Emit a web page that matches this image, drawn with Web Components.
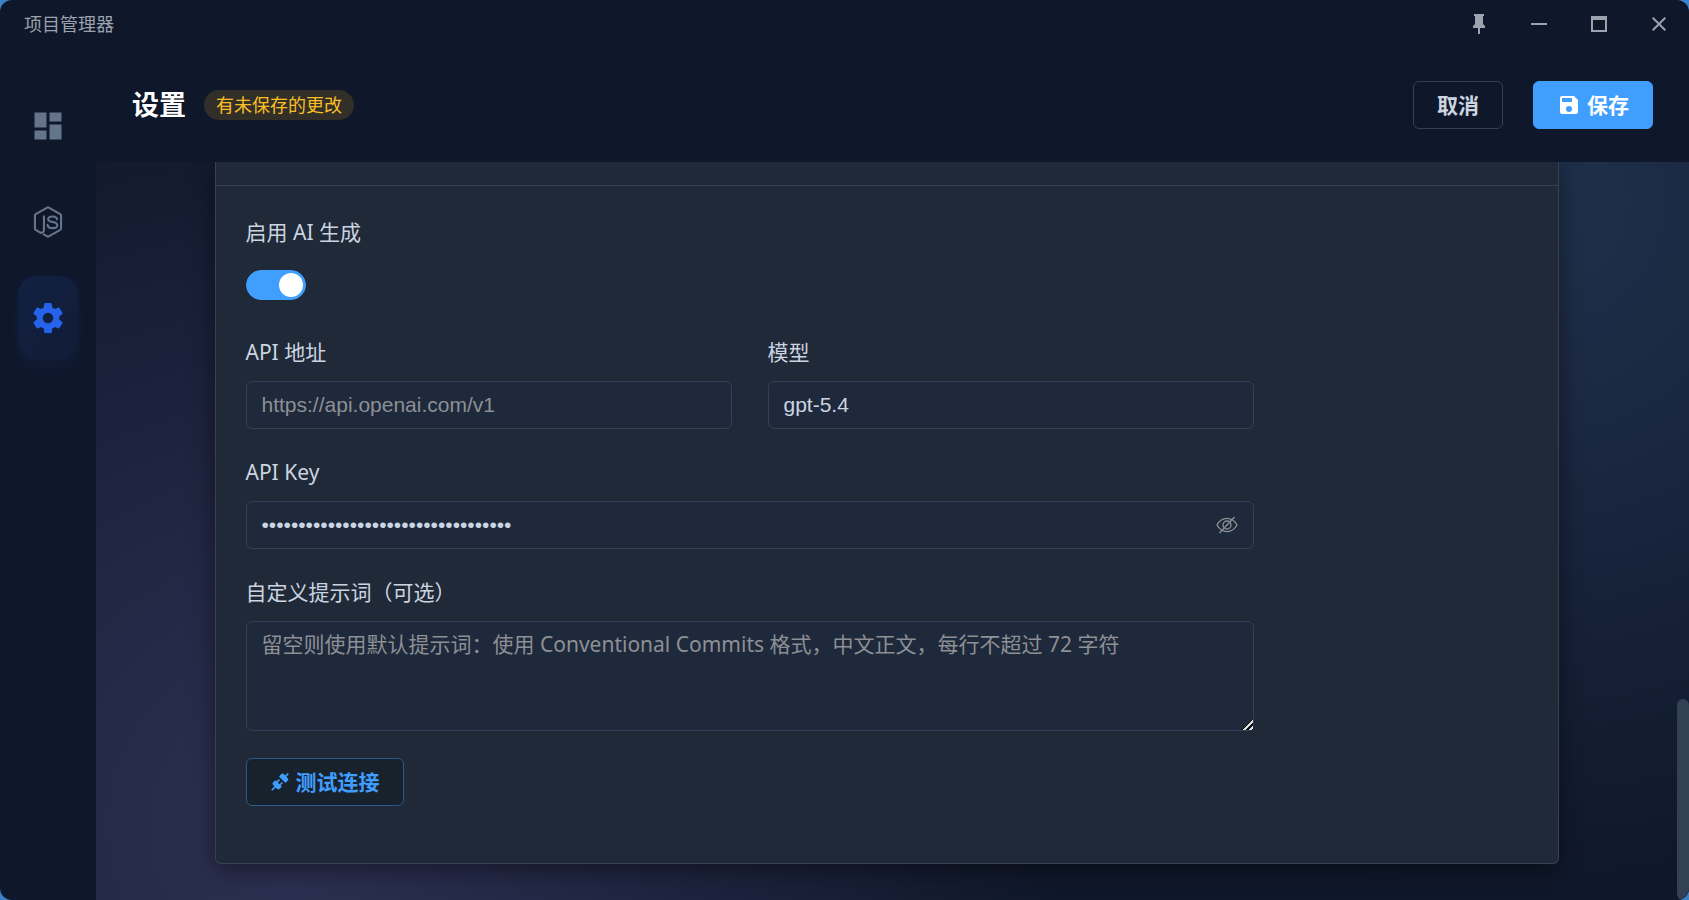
<!DOCTYPE html>
<html lang="zh-CN">
<head>
<meta charset="utf-8">
<title>项目管理器</title>
<style>
  html, body {
    height: 100%;
    margin: 0;
    background: #3b82c9;
  }
  body {
    font-family: "Noto Sans", "Noto Sans CJK SC", sans-serif;
    font-size: 21px;
    color: #cbd5e1;
  }
</style>
</head>
<body>
<pm-window>
  <pm-titlebar slot="titlebar">项目管理器</pm-titlebar>
  <pm-sidebar slot="sidebar"></pm-sidebar>
  <pm-header slot="header" badge="有未保存的更改">设置
    <pm-button slot="actions" variant="plain">取消</pm-button>
    <pm-button slot="actions" variant="primary" icon="save">保存</pm-button>
  </pm-header>
  <pm-card>
    <pm-switch label="启用 AI 生成" checked></pm-switch>
    <pm-row>
      <pm-input label="API 地址" placeholder="https://api.openai.com/v1"></pm-input>
      <pm-input label="模型" value="gpt-5.4"></pm-input>
    </pm-row>
    <pm-input label="API Key" type="password" value="0123456789012345678901234567890123"></pm-input>
    <pm-textarea label="自定义提示词（可选）" placeholder="留空则使用默认提示词：使用 Conventional Commits 格式，中文正文，每行不超过 72 字符"></pm-textarea>
    <pm-button variant="outline" icon="connect">测试连接</pm-button>
  </pm-card>
</pm-window>

<script>
const icons = {
  pin: '<path d="M16 12V4h1V2H7v2h1v8l-2 2v2h5v6h2v-6h5v-2l-2-2z"/>',
  minimize: '<path d="M4 11h16v2H4z"/>',
  maximize: '<path d="M4 4h16v16H4V4m2 4v10h12V8H6z"/>',
  close: '<path d="M19 6.4L17.6 5 12 10.6 6.4 5 5 6.4l5.600 5.600L5 17.600 6.400 19 12 13.400 17.600 19 19 17.600 13.400 12z"/>',
  dashboard: '<path d="M13 3v6h8V3m-8 18h8V11h-8M3 21h8v-6H3m0-2h8V3H3v10z"/>',
  node: '<g fill="none" stroke="currentColor" stroke-width="1.400" stroke-linejoin="round" stroke-linecap="round"><path d="M7.200 19.200L3.800 17.200c-.3-.2-.5-.5-.5-.8V7.600c0-.3.200-.6.500-.8l7.700-4.400c.3-.2.700-.2 1 0l7.700 4.400c.3.200.5.500.5.800v8.800c0 .3-.2.600-.5.800l-7.700 4.400c-.3.200-.7.200-1 0l-2.300-1.300"/><path d="M9.300 8.200v8.800c0 1.500-.7 2.300-2.100 2.200"/><path d="M18 10.200c-.2-1.300-1.300-1.900-3-1.900-1.800 0-2.900.7-2.900 1.900 0 2.700 6.100.9 6.100 3.900 0 1.400-1.200 2-3.100 2-2.100 0-3.300-.7-3.400-2.200"/></g>',
  cog: '<path d="M12 15.500A3.500 3.500 0 0 1 8.500 12 3.500 3.500 0 0 1 12 8.500a3.500 3.500 0 0 1 3.500 3.500 3.500 3.500 0 0 1-3.500 3.500m7.430-2.530c.04-.32.070-.64.070-.97s-.03-.66-.07-1l2.110-1.630c.19-.15.240-.42.120-.64l-2-3.460c-.12-.22-.39-.31-.61-.22l-2.490 1c-.52-.39-1.060-.73-1.690-.98l-.37-2.650A.506.506 0 0 0 14 2h-4c-.25 0-.46.180-.5.420l-.37 2.650c-.63.250-1.170.590-1.690.980l-2.490-1c-.22-.09-.49 0-.61.220l-2 3.460c-.13.220-.07.490.12.640L4.570 11c-.04.340-.07.670-.07 1s.03.650.07.970l-2.110 1.660c-.19.150-.25.420-.12.640l2 3.460c.12.220.39.300.61.220l2.490-1.010c.52.400 1.060.740 1.690.990l.37 2.650c.4.240.25.420.5.420h4c.25 0 .46-.18.500-.42l.37-2.650c.63-.26 1.170-.59 1.690-.99l2.490 1.010c.22.080.49 0 .61-.22l2-3.460c.12-.22.070-.49-.12-.64z"/>',
  save: '<path d="M15 9H5V5h10m-3 14a3 3 0 0 1-3-3 3 3 0 0 1 3-3 3 3 0 0 1 3 3 3 3 0 0 1-3 3m5-16H5a2 2 0 0 0-2 2v14a2 2 0 0 0 2 2h14a2 2 0 0 0 2-2V7z"/>',
  connect: '<path d="M21.400 7.500c.8.800.8 2.100 0 2.800l-2.800 2.800-7.800-7.800 2.800-2.800c.8-.8 2.100-.8 2.800 0l1.800 1.800 3-3 1.400 1.400-3 3 1.800 1.800m-5.800 5.800l-1.400-1.400-2.800 2.800-2.100-2.100 2.800-2.800-1.400-1.400-2.800 2.800-1.500-1.400-2.800 2.800c-.8.800-.8 2.100 0 2.800l1.800 1.800-4 4 1.400 1.400 4-4 1.800 1.800c.8.800 2.100.8 2.800 0l2.800-2.800-1.400-1.400 2.800-2.900z"/>',
  hidden: '<g fill="none" stroke="currentColor" stroke-width="1.300"><path d="M2 12c2.500-4.600 5.800-6.600 10-6.600s7.500 2 10 6.600c-2.500 4.600-5.800 6.600-10 6.600S4.500 16.600 2 12z"/><circle cx="12" cy="12" r="4"/><path d="M4.500 20L19.500 4"/></g>'
};

const icon = (name, size) =>
  `<svg viewBox="0 0 24 24" width="${size}" height="${size}" fill="currentColor" aria-hidden="true">${icons[name]}</svg>`;

// Base class: each element returns its markup from `html`
class PmElement extends HTMLElement {
  constructor () {
    super();
    this.attachShadow({ mode: 'open' });
  }
  connectedCallback () {
    const template = document.createElement('template');
    template.innerHTML = this.html;
    this.shadowRoot.replaceChildren(template.content.cloneNode(true));
  }
}

class PmWindow extends PmElement {
  get html () {
    return `<style>
        :host {
          display: grid;
          grid-template: auto auto 1fr / 96px 1fr;
          height: 100vh;
          overflow: hidden;
          border-radius: 12px;
          background: #0f172a;
        }
        .top {
          grid-column: 1 / -1;
        }
        .side {
          grid-row: 2 / 4;
        }
        .main {
          display: grid;
          grid-template-columns: 1fr 12px;
          min-height: 0;
          overflow: hidden;
          background:
            radial-gradient(circle at 12% 90%, rgba(125, 115, 190, .28), transparent 50%),
            radial-gradient(circle at 90% 5%, rgba(120, 180, 255, .16), transparent 44%),
            #0f172a;
        }
        .page {
          padding: 0 36px 36px;
        }
        .thumb {
          align-self: end;
          height: 27.2%;
          border-radius: 6px;
          background: #334155;
        }
      </style>
      <div class="top"><slot name="titlebar"></slot></div>
      <div class="side"><slot name="sidebar"></slot></div>
      <slot name="header"></slot>
      <main class="main">
        <div class="page"><slot></slot></div>
        <div class="thumb"></div>
      </main>`;
  }
}

class PmTitlebar extends PmElement {
  get html () {
    return `<style>
        :host {
          display: flex;
          align-items: center;
          justify-content: space-between;
          height: 48px;
          padding-left: 24px;
          font-size: 18px;
          line-height: 27px;
          color: #9ca3af;
        }
        .controls {
          display: flex;
        }
        button {
          display: grid;
          place-items: center;
          width: 60px;
          height: 48px;
          padding: 0;
          border: 0;
          background: none;
          color: inherit;
        }
      </style>
      <span><slot></slot></span>
      <div class="controls">
        <button aria-label="置顶">${icon('pin', 24)}</button>
        <button aria-label="最小化">${icon('minimize', 24)}</button>
        <button aria-label="最大化">${icon('maximize', 24)}</button>
        <button aria-label="关闭">${icon('close', 24)}</button>
      </div>`;
  }
}

class PmSidebar extends PmElement {
  get html () {
    return `<style>
        nav {
          display: flex;
          flex-direction: column;
          gap: 12px;
          padding: 36px 18px;
        }
        a {
          display: grid;
          place-items: center;
          height: 84px;
          border-radius: 18px;
          color: #64748b;
        }
        a.active {
          color: #2563eb;
          background: linear-gradient(135deg, rgba(37, 99, 235, .12), rgba(37, 99, 235, .07));
          box-shadow: 0 6px 18px rgba(37, 99, 235, .08);
        }
      </style>
      <nav>
        <a href="#projects" aria-label="项目">${icon('dashboard', 36)}</a>
        <a href="#node" aria-label="Node">${icon('node', 36)}</a>
        <a href="#settings" class="active" aria-label="设置">${icon('cog', 36)}</a>
      </nav>`;
  }
}

class PmHeader extends PmElement {
  get html () {
    return `<style>
        :host {
          display: flex;
          align-items: center;
          gap: 18px;
          padding: 33px 36px;
        }
        h1 {
          margin: 0;
          font-size: 27px;
          line-height: 36px;
          font-weight: 700;
          color: #fff;
        }
        .badge {
          padding: 0 12px;
          border-radius: 15px;
          font-size: 18px;
          line-height: 30px;
          color: #fbbf24;
          background: rgba(251, 191, 36, .15);
        }
        .actions {
          display: flex;
          gap: 30px;
          margin-left: auto;
        }
      </style>
      <h1><slot></slot></h1>
      <span class="badge">${this.getAttribute('badge')}</span>
      <div class="actions"><slot name="actions"></slot></div>`;
  }
}

class PmButton extends PmElement {
  get html () {
    const name = this.getAttribute('icon');
    return `<style>
        :host {
          display: inline-block;
        }
        button {
          display: flex;
          align-items: center;
          gap: 6px;
          height: 48px;
          padding: 0 23px;
          border: 1px solid #334155;
          border-radius: 6px;
          font: inherit;
          font-size: 21px;
          line-height: 30px;
          font-weight: 700;
          color: #cbd5e1;
          background: none;
        }
        :host([variant="primary"]) button {
          color: #fff;
          border-color: #409eff;
          background: #409eff;
        }
        :host([variant="outline"]) button {
          color: #409eff;
          border-color: #2a598a;
          background: #18222c;
        }
      </style>
      <button>${name ? icon(name, name === 'save' ? 24 : 20) : ''}<slot></slot></button>`;
  }
}

class PmCard extends PmElement {
  get html () {
    return `<style>
        :host {
          display: block;
          max-width: 1342px;
          margin: 0 auto;
          border: 1px solid #374151;
          border-top: 0;
          border-radius: 0 0 6px 6px;
          background: #202937;
          box-shadow: 0 6px 24px rgba(0, 0, 0, .45);
        }
        .head {
          height: 23px;
          border-bottom: 1px solid #374151;
        }
        .body {
          display: grid;
          gap: 27px;
          justify-items: start;
          padding: 30px 30px 57px;
        }
        ::slotted(*) {
          max-width: 1008px;
        }
      </style>
      <div class="head"></div>
      <div class="body"><slot></slot></div>`;
  }
}

class PmRow extends PmElement {
  get html () {
    return `<style>
        :host {
          display: grid;
          grid-template-columns: 1fr 1fr;
          gap: 36px;
          width: 100%;
        }
      </style>
      <slot></slot>`;
  }
}

const fieldStyle = `
  :host {
    display: block;
    width: 100%;
  }
  label {
    display: block;
    margin-bottom: 12px;
    font-size: 21px;
    line-height: 33px;
    color: #cbd5e1;
  }
  input, textarea {
    display: block;
    box-sizing: border-box;
    width: 100%;
    padding: 0 15px;
    border: 1px solid #334155;
    border-radius: 6px;
    outline: 0;
    font-size: 21px;
    color: #cbd5e1;
    background: #1e293b;
  }
  ::placeholder {
    color: #8d9095;
  }`;

class PmSwitch extends PmElement {
  get html () {
    return `<style>
        ${fieldStyle}
        .control {
          display: flex;
          align-items: center;
          height: 48px;
        }
        input {
          appearance: none;
          display: flex;
          align-items: center;
          width: 60px;
          height: 30px;
          margin: 0;
          padding: 0 2px;
          border-radius: 15px;
        }
        input::before {
          content: "";
          width: 24px;
          height: 24px;
          border-radius: 50%;
          background: #fff;
        }
        input:checked {
          justify-content: flex-end;
          border-color: #409eff;
          background: #409eff;
        }
      </style>
      <label for="switch">${this.getAttribute('label')}</label>
      <div class="control">
        <input id="switch" type="checkbox" role="switch" ${this.hasAttribute('checked') ? 'checked' : ''}>
      </div>`;
  }
}

class PmInput extends PmElement {
  get html () {
    const type = this.getAttribute('type') || 'text';
    return `<style>
        ${fieldStyle}
        input {
          height: 48px;
          font-family: "Liberation Sans", sans-serif;
        }
        .control {
          position: relative;
        }
        button {
          position: absolute;
          top: 0;
          right: 15px;
          display: grid;
          place-items: center;
          height: 48px;
          padding: 0;
          border: 0;
          background: none;
          color: #8d9095;
        }
      </style>
      <label for="field">${this.getAttribute('label')}</label>
      <div class="control">
        <input id="field" type="${type}" value="${this.getAttribute('value') || ''}" placeholder="${this.getAttribute('placeholder') || ''}">
        ${type === 'password' ? `<button aria-label="显示密码">${icon('hidden', 24)}</button>` : ''}
      </div>`;
  }
  connectedCallback () {
    super.connectedCallback();
    const input = this.shadowRoot.querySelector('input');
    const toggle = this.shadowRoot.querySelector('button');
    if (toggle) {
      toggle.onclick = () => {
        input.type = input.type === 'password' ? 'text' : 'password';
      };
    }
  }
}

class PmTextarea extends PmElement {
  get html () {
    return `<style>
        ${fieldStyle}
        textarea {
          height: 110px;
          padding: 7px 15px;
          font-family: inherit;
          line-height: 31px;
          resize: vertical;
        }
        ::-webkit-resizer {
          background: linear-gradient(135deg, transparent 60%, #111 60% 66%, #ddd 66% 74%, #111 74% 86%, #ddd 86% 94%, transparent 94%);
        }
      </style>
      <label for="field">${this.getAttribute('label')}</label>
      <textarea id="field" placeholder="${this.getAttribute('placeholder')}"></textarea>`;
  }
}

window.customElements.define('pm-window', PmWindow);
window.customElements.define('pm-titlebar', PmTitlebar);
window.customElements.define('pm-sidebar', PmSidebar);
window.customElements.define('pm-header', PmHeader);
window.customElements.define('pm-button', PmButton);
window.customElements.define('pm-card', PmCard);
window.customElements.define('pm-row', PmRow);
window.customElements.define('pm-switch', PmSwitch);
window.customElements.define('pm-input', PmInput);
window.customElements.define('pm-textarea', PmTextarea);
</script>
</body>
</html>
